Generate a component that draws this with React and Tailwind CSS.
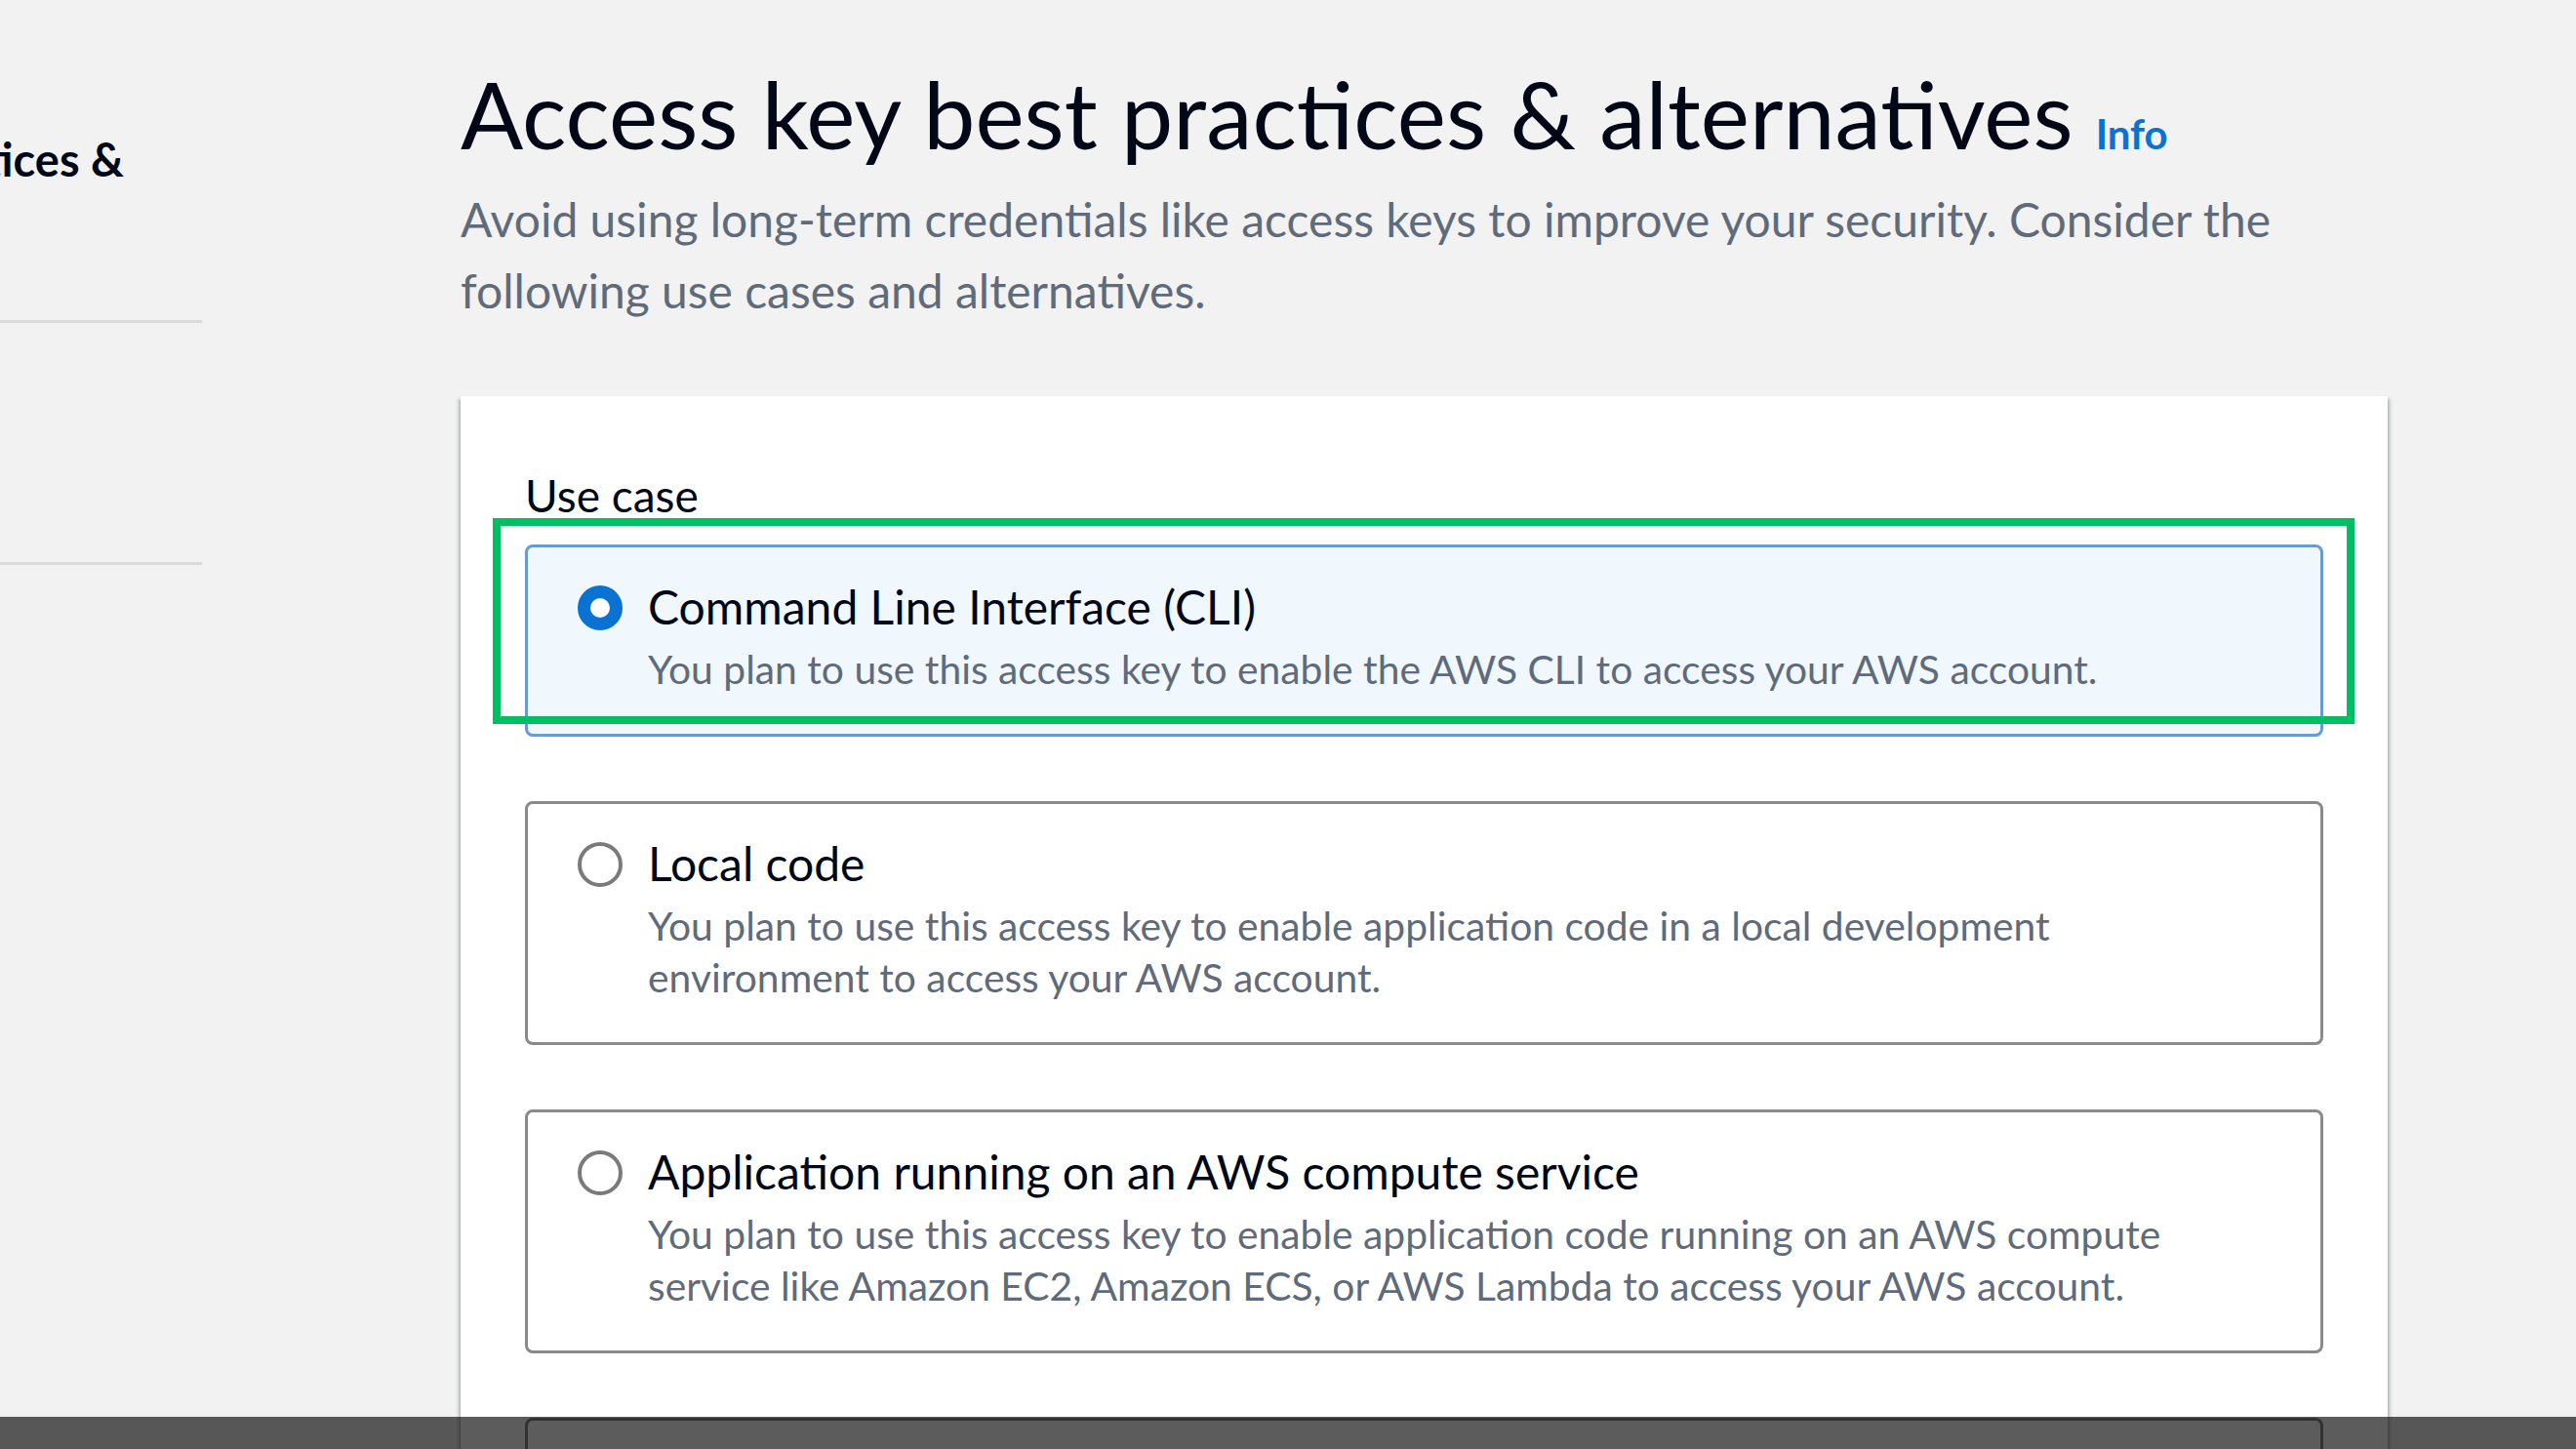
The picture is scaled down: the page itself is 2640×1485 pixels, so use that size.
import React from "react";

function Radio({ checked }) {
  if (checked) {
    return (
      <span className="mt-[7px] block h-[46px] w-[46px] shrink-0 rounded-full border-[13px] border-[#0972d3] bg-white" />
    );
  }
  return (
    <span className="mt-[7px] block h-[46px] w-[46px] shrink-0 rounded-full border-[4px] border-[#7a7a7a] bg-white" />
  );
}

function Tile({ checked, label, children, highlight }) {
  return (
    <div
      className={
        checked
          ? "relative rounded-[8px] border-[3px] border-[#6a9bd0] bg-[#f0f7fd] pl-[51px] pr-[40px] pt-[32px] pb-[40px]"
          : "relative rounded-[8px] border-[3px] border-[#8a8a8a] bg-white pl-[51px] pr-[40px] pt-[32px] pb-[40px]"
      }
    >
      <div className="flex gap-[26px]">
        <Radio checked={checked} />
        <div>
          <div className="text-[48px] leading-[58px] text-[#000716]">{label}</div>
          <div className="mt-[8px] text-[40.8px] leading-[53px] text-[#5f6b7a]">{children}</div>
        </div>
      </div>
      {highlight && (
        <div className="pointer-events-none absolute -left-[36px] -right-[35px] -top-[30px] bottom-[10px] border-[8px] border-[#00bf63]" />
      )}
    </div>
  );
}

export default function App() {
  return (
    <div className="relative h-[1485px] w-[2640px] overflow-hidden bg-[#f2f2f2] font-['Lato',sans-serif]">
      <div className="flex">
        <aside className="w-[207px] shrink-0">
          <div className="h-[331px] border-b-[3px] border-[#dadada] pt-[134px]">
            <div className="flex w-[127px] justify-end overflow-hidden whitespace-nowrap text-[47px] font-bold leading-[58px] text-[#000716]">
              Best practices &amp;
            </div>
          </div>
          <div className="h-[248px] border-b-[3px] border-[#dadada]" />
        </aside>

        <main className="ml-[265px] w-[1975px] shrink-0 pt-[60px]">
          <div className="flex items-baseline gap-[23px]">
            <h1 className="text-[95px] font-normal leading-[112px] text-[#000716]">
              Access key best practices &amp; alternatives
            </h1>
            <a className="text-[42px] font-bold text-[#0972d3]">Info</a>
          </div>
          <p className="mt-[16px] text-[48px] leading-[73px] text-[#5f6b7a]">
            Avoid using long-term credentials like access keys to improve your security. Consider the
            <br />
            following use cases and alternatives.
          </p>

          <section className="mt-[72px] bg-white px-[66px] pt-[73px] shadow-[0_3px_3px_0_rgba(0,28,36,0.3),3px_3px_3px_0_rgba(0,28,36,0.15),-3px_3px_3px_0_rgba(0,28,36,0.15)]">
            <div className="text-[46px] leading-[58px] text-[#000716]">Use case</div>
            <div className="mt-[21px] flex flex-col gap-[66px] pb-[60px]">
              <Tile checked label="Command Line Interface (CLI)" highlight>
                You plan to use this access key to enable the AWS CLI to access your AWS account.
              </Tile>
              <Tile label="Local code">
                You plan to use this access key to enable application code in a local development
                <br />
                environment to access your AWS account.
              </Tile>
              <Tile label="Application running on an AWS compute service">
                You plan to use this access key to enable application code running on an AWS compute
                <br />
                service like Amazon EC2, Amazon ECS, or AWS Lambda to access your AWS account.
              </Tile>
              <div className="h-[250px] rounded-[8px] border-[3px] border-[#8a8a8a] bg-white" />
            </div>
          </section>
        </main>
      </div>
      <div className="absolute bottom-0 left-0 right-0 h-[33px] bg-black/[0.64]" />
    </div>
  );
}
